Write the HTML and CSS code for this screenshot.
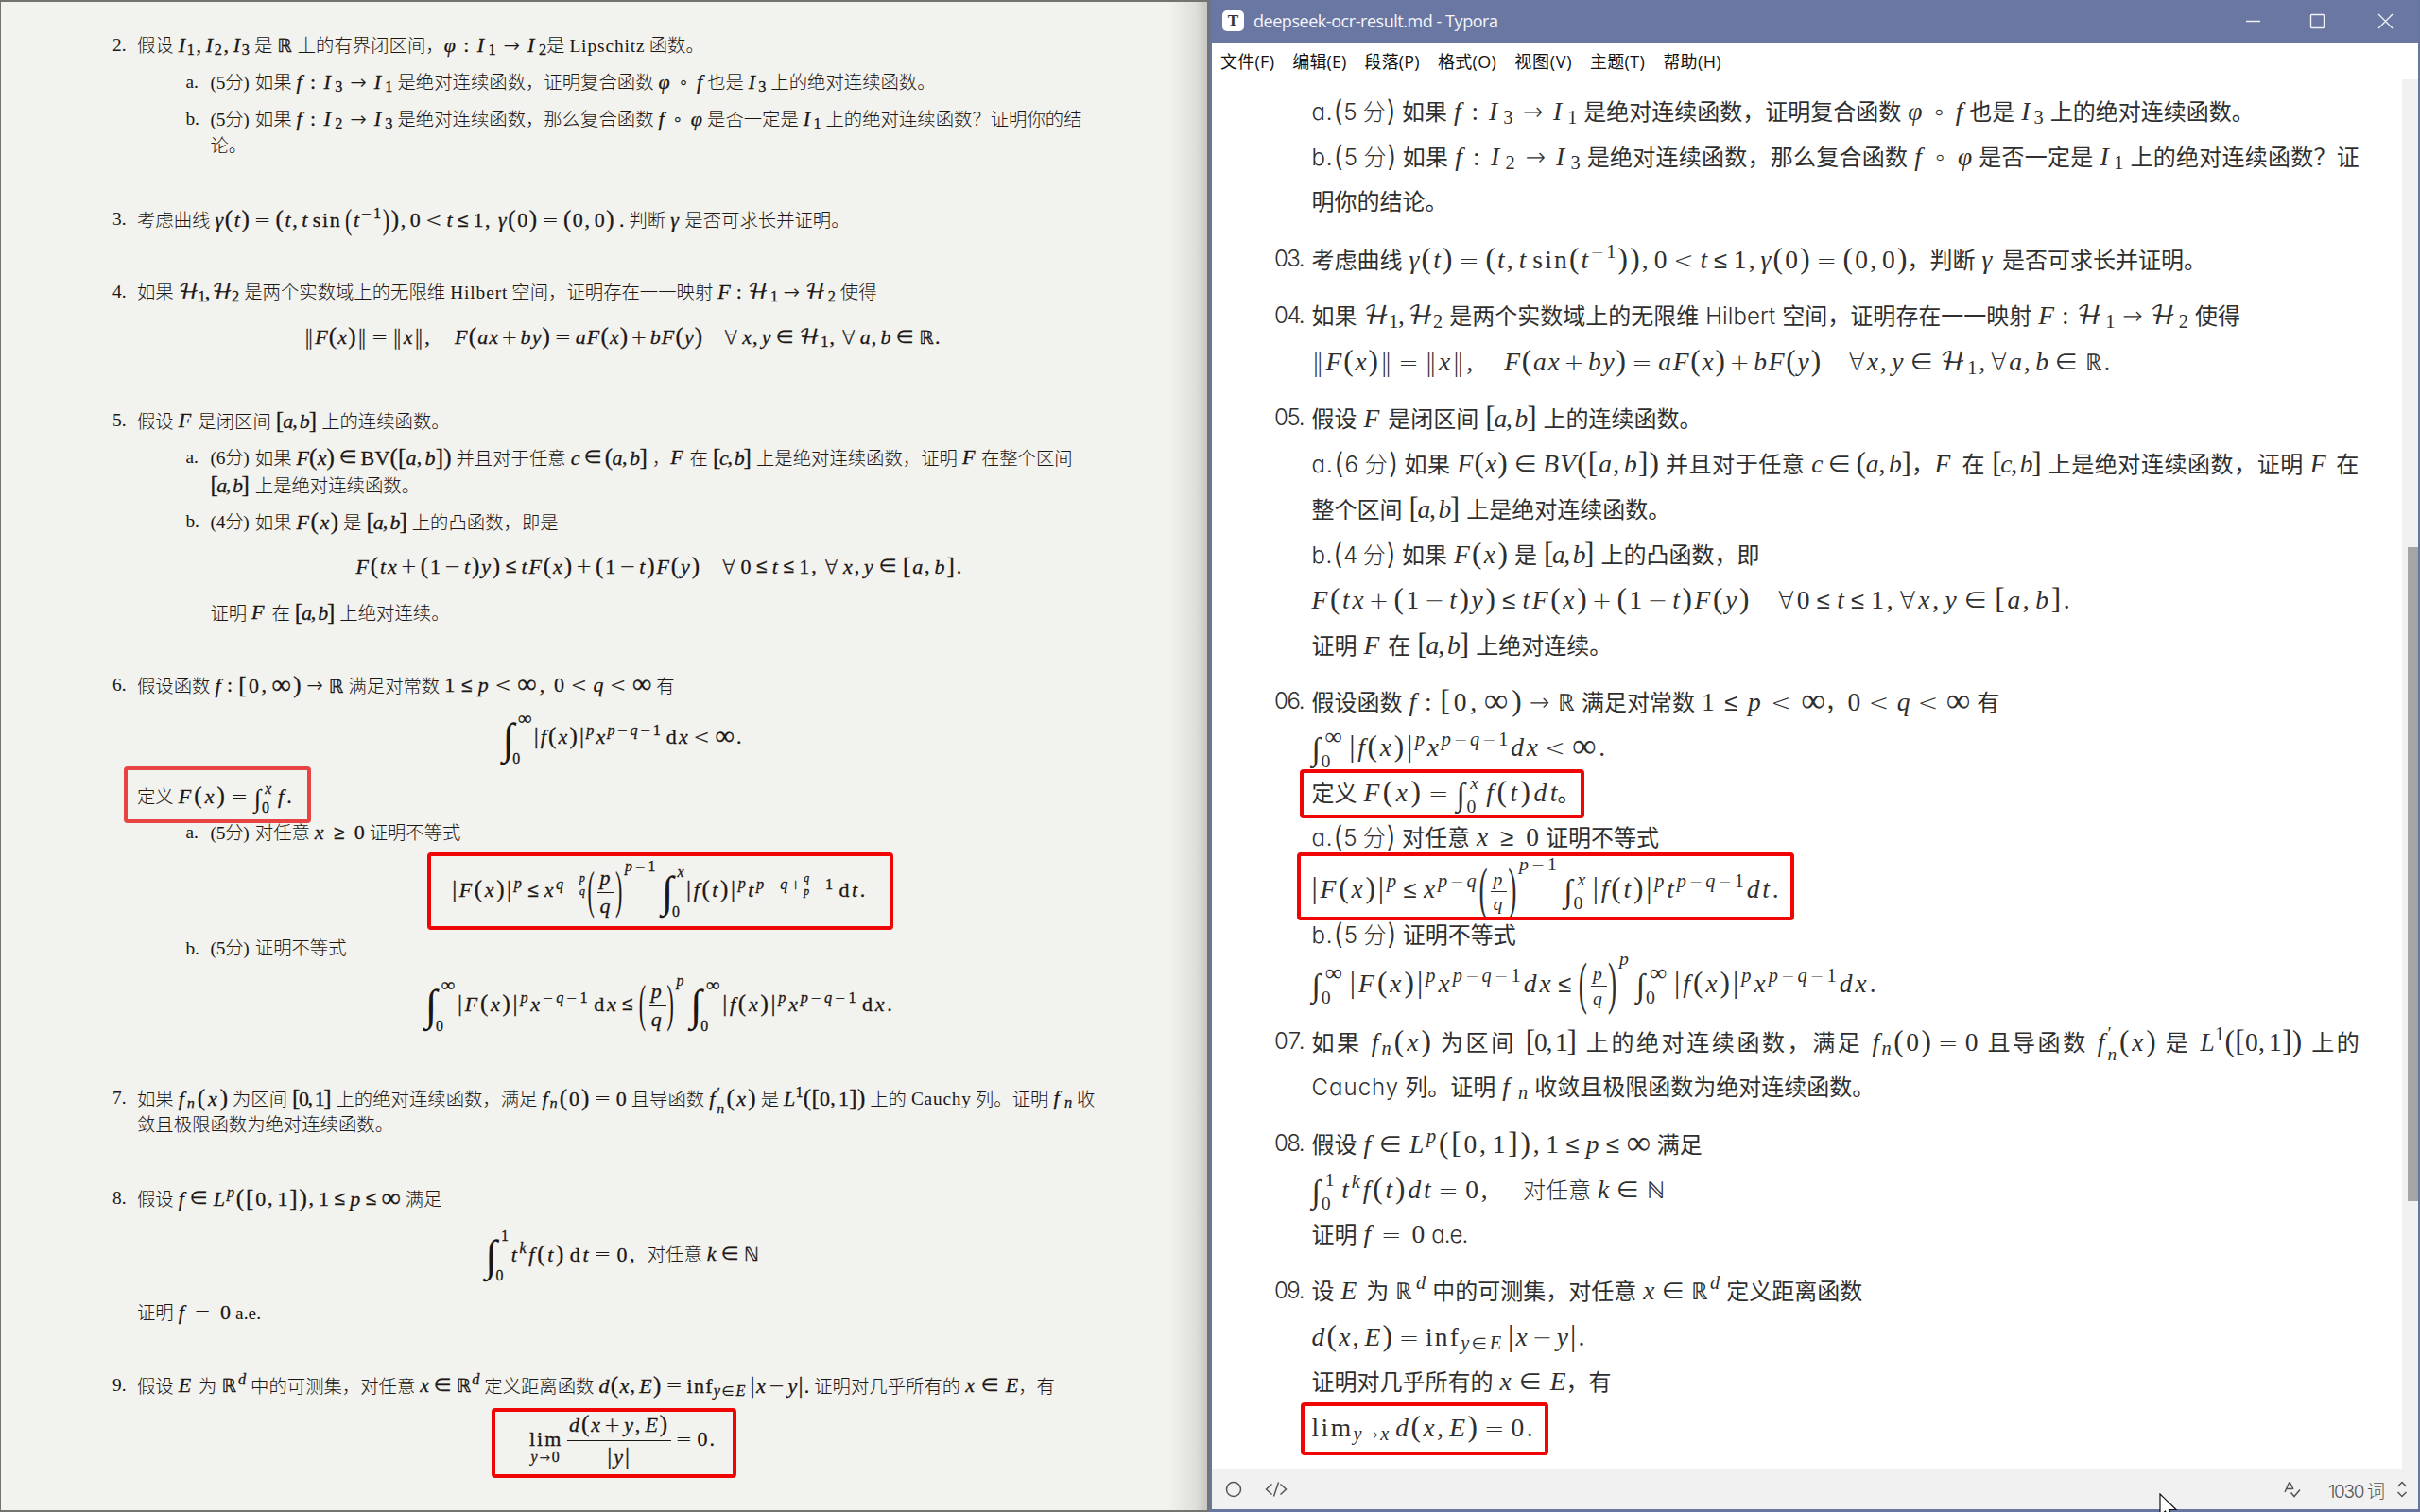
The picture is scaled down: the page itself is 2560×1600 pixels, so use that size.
FILE: index.html
```html
<!DOCTYPE html>
<html lang="zh-CN">
<head>
<meta charset="utf-8">
<title>deepseek-ocr-result.md - Typora</title>
<link rel="stylesheet" href="styles.css">
</head>
<body>
<main class="desk">
<section class="paper">
  <div class="q"><span class="no">2.</span><div class="body">
    <div class="row">假设<i data-w="85.2">I_{1},I_{2},I_{3}</i>是<i data-w="26.5">ℝ</i>上的有界闭区间，<i class="flat" data-w="108.4">φ:I_{1}→I_{2}</i>是<b data-w="89.3">Lipschitz</b>函数。</div>
    <div class="sub"><span class="let">a.</span><div class="body"><div class="row"><b class="pts" data-w="47.4">(5分)</b>如果<i data-w="112">f:I_{3}→I_{1}</i>是绝对连续函数，证明复合函数<i data-w="56.5">φ∘f</i>也是<i data-w="28.6">I_{3}</i>上的绝对连续函数。</div></div></div>
    <div class="sub"><span class="let">b.</span><div class="body"><div class="row"><b class="pts" data-w="47.4">(5分)</b>如果<i data-w="112">f:I_{2}→I_{3}</i>是绝对连续函数，那么复合函数<i data-w="56.5">f∘φ</i>是否一定是<i data-w="28.7">I_{1}</i>上的绝对连续函数？证明你的结</div><div class="row">论。</div></div></div>
  </div></div>
  <div class="q"><span class="no">3.</span><div class="body">
    <div class="row">考虑曲线<i data-w="443">γ(t)=(t,t~\r{sin}~\M{(}t^{−1}\M{)}),0&lt;t≤1,~γ(0)=(0,0)~.</i>判断<i data-w="20.2">γ</i>是否可求长并证明。</div>
  </div></div>
  <div class="q"><span class="no">4.</span><div class="body">
    <div class="row">如果<i data-w="74.5">ℋ_{1},ℋ_{2}</i>是两个实数域上的无限维<b data-w="70.2">Hilbert</b>空间，证明存在一一映射<i data-w="134.5">F:ℋ_{1}→ℋ_{2}</i>使得</div>
    <div class="eq"><i class="flat" data-w="673">‖F(x)‖=‖x‖,\q F(ax+by)=aF(x)+bF(y)\q ∀~x,y∈ℋ_{1},~∀~a,b∈ℝ.</i></div>
  </div></div>
  <div class="q"><span class="no">5.</span><div class="body">
    <div class="row">假设<i data-w="25.6">F</i>是闭区间<i data-w="53.4">[a,b]</i>上的连续函数。</div>
    <div class="sub"><span class="let">a.</span><div class="body"><div class="row"><b class="pts" data-w="47.4">(6分)</b>如果<i data-w="174">F(x)∈\r{BV}([a,b])</i>并且对于任意<i data-w="91.2">c∈(a,b]</i>，<i class="flat" data-w="20.4">F</i>在<i data-w="51">[c,b]</i>上是绝对连续函数，证明<i data-w="25">F</i>在整个区间</div><div class="row"><i class="lead" data-w="47.4">[a,b]</i>上是绝对连续函数。</div></div></div>
    <div class="sub"><span class="let">b.</span><div class="body"><div class="row"><b class="pts" data-w="47.4">(4分)</b>如果<i data-w="54.6">F(x)</i>是<i data-w="53.3">[a,b]</i>上的凸函数，即是</div>
      <div class="eq mid"><i class="flat" data-w="640.5">F(tx+(1−t)y)≤tF(x)+(1−t)F(y)\q ∀~0≤t≤1,~∀~x,y∈[a,b].</i></div>
      <div class="row">证明<i data-w="26.3">F</i>在<i data-w="52.6">[a,b]</i>上绝对连续。</div></div></div>
  </div></div>
  <div class="q"><span class="no">6.</span><div class="body">
    <div class="row">假设函数<i data-w="146">f:[0,∞)→ℝ</i>满足对常数<i data-w="229">1≤p&lt;∞,~0&lt;q&lt;∞</i>有</div>
    <div class="eq tall"><i class="flat" data-w="253">\D{0}{∞}|f(x)|^{p}x^{p−q−1}~\r{d}x&lt;∞.</i></div>
    <div class="row">定义<i class="lead5" data-w="125">F(x)=\I{0}{x}~f.</i></div>
    <div class="sub"><span class="let">a.</span><div class="body"><div class="row"><b class="pts" data-w="47.4">(5分)</b>对任意<i data-w="62.8">x≥0</i>证明不等式</div>
      <div class="eq taller"><i class="flat" data-w="437">|F(x)|^{p}≤x^{q−\f{p}{q}}\B{(}\F{p}{q}\B{)}\S{p−1}~\D{0}{x}|f(t)|^{p}t^{p−q+\f{q}{p}−1}~\r{d}t.</i></div></div></div>
    <div class="sub tight"><span class="let">b.</span><div class="body"><div class="row"><b class="pts" data-w="47.4">(5分)</b>证明不等式</div>
      <div class="eq taller last"><i class="flat" data-w="494">\D{0}{∞}|F(x)|^{p}x^{−q−1}~\r{d}x≤\B{(}\F{p}{q}\B{)}\S{p}~\D{0}{∞}|f(x)|^{p}x^{p−q−1}~\r{d}x.</i></div></div></div>
  </div></div>
  <div class="q"><span class="no">7.</span><div class="body">
    <div class="row">如果<i data-w="62.3">f_{n}(x)</i>为区间<i data-w="51.4">[0,1]</i>上的绝对连续函数，满足<i data-w="99.3">f_{n}(0)=0</i>且导函数<i data-w="59.5">f\s{n}{′}(x)</i>是<i data-w="96.2">L^{1}([0,1])</i>上的<b data-w="73">Cauchy</b>列。证明<i data-w="29.7">f_{n}</i>收</div>
    <div class="row">敛且极限函数为绝对连续函数。</div>
  </div></div>
  <div class="q"><span class="no">8.</span><div class="body">
    <div class="row">假设<i data-w="245">f∈L^{p}([0,1]),1≤p≤∞</i>满足</div>
    <div class="eq tall low"><i class="flat" data-w="161.5">\D{0}{1}t^{k}f(t)~\r{d}t=0,</i><span class="cjk">对任意</span><i class="lead5" data-w="60">k∈ℕ</i></div>
    <div class="row">证明<i data-w="65.4">f=0</i>a.e.</div>
  </div></div>
  <div class="q"><span class="no">9.</span><div class="body">
    <div class="row">假设<i data-w="26.3">E</i>为<i data-w="35.7">ℝ^{d}</i>中的可测集，对任意<i data-w="73">x∈ℝ^{d}</i>定义距离函数<i data-w="232.8">d(x,E)=\r{inf}_{y∈E}~|x−y|.</i>证明对几乎所有的<i class="lead5" data-w="61">x∈E</i>，有</div>
    <div class="eq tall lim"><i class="flat" data-w="196">\L{y→0}~\F{d(x+y,E)}{|y|}=0.</i></div>
  </div></div>
</section>

<section class="window">
  <header class="title">
    <span class="logo">T</span><b class="flat" data-w="259">deepseek-ocr-result.md - Typora</b>
    <svg class="ctl" viewBox="0 0 160 20" width="160" height="20"><path d="M2 10.500H17M71.500 3.500h12a1 1 0 0 1 1 1v12a1 1 0 0 1-1 1h-12a1 1 0 0 1-1-1v-12a1 1 0 0 1 1-1zM142 3l15 15M157 3l-15 15"/></svg>
  </header>
  <nav class="menu">
    <b class="flat" data-w="57">文件(F)</b><b class="flat" data-w="57">编辑(E)</b><b class="flat" data-w="58">段落(P)</b><b class="flat" data-w="62">格式(O)</b><b class="flat" data-w="60.4">视图(V)</b><b class="flat" data-w="58">主题(T)</b><b class="flat" data-w="61.5">帮助(H)</b>
  </nav>
  <div class="view">
    <article class="doc">
      <div class="item"><b class="num" data-w="39.5"></b><div>
        <div class="ln"><b class="pts" data-w="95.4">a.<u>(</u>5 分<u>)</u></b>如果<i data-w="144.4">f:I_{3}→I_{1}</i>是绝对连续函数，证明复合函数<i data-w="72">φ∘f</i>也是<i data-w="37.5">I_{3}</i>上的绝对连续函数。</div>
        <div class="ln j1"><b class="pts" data-w="96.2">b.<u>(</u>5 分<u>)</u></b>如果<i data-w="146.5">f:I_{2}→I_{3}</i>是绝对连续函数，那么复合函数<i data-w="75">f∘φ</i>是否一定是<i data-w="39">I_{1}</i>上的绝对连续函数？证</div>
        <div class="ln">明你的结论。</div></div></div>
      <div class="item"><b class="num" data-w="39.5">03.</b><div>
        <div class="ln">考虑曲线<i class="lead5" data-w="534">γ(t)=(t,t~\r{sin}(t^{−1})),0&lt;t≤1,γ(0)=(0,0)</i>，判断<i data-w="28.4">γ</i>是否可求长并证明。</div></div></div>
      <div class="item"><b class="num" data-w="39.5">04.</b><div>
        <div class="ln">如果<i data-w="97.7">ℋ_{1},ℋ_{2}</i>是两个实数域上的无限维<b data-w="88">Hilbert</b>空间，证明存在一一映射<i data-w="172.8">F:ℋ_{1}→ℋ_{2}</i>使得</div>
        <div class="ln"><i class="flat" data-w="845">‖F(x)‖=‖x‖,\q F(ax+by)=aF(x)+bF(y)\q ∀x,y∈ℋ_{1},∀a,b∈ℝ.</i></div></div></div>
      <div class="item"><b class="num" data-w="39.5">05.</b><div>
        <div class="ln">假设<i data-w="32.7">F</i>是闭区间<i data-w="68.4">[a,b]</i>上的连续函数。</div>
        <div class="ln j2"><b class="pts" data-w="97.9">a.<u>(</u>6 分<u>)</u></b>如果<i data-w="227.5">F(x)∈BV([a,b])</i>并且对于任意<i class="lead5" data-w="112.7">c∈(a,b]</i>，<i class="trail" data-w="29">F</i>在<i data-w="66.6">[c,b]</i>上是绝对连续函数，证明<i data-w="34.5">F</i>在</div>
        <div class="ln">整个区间<i data-w="67.7">[a,b]</i>上是绝对连续函数。</div>
        <div class="ln"><b class="pts" data-w="95.4">b.<u>(</u>4 分<u>)</u></b>如果<i data-w="71">F(x)</i>是<i data-w="67.5">[a,b]</i>上的凸函数，即</div>
        <div class="ln"><i class="flat" data-w="802">F(tx+(1−t)y)≤tF(x)+(1−t)F(y)\q ∀0≤t≤1,∀x,y∈[a,b].</i></div>
        <div class="ln">证明<i data-w="32.7">F</i>在<i data-w="69">[a,b]</i>上绝对连续。</div></div></div>
      <div class="item"><b class="num" data-w="39.5">06.</b><div>
        <div class="ln">假设函数<i data-w="189.5">f:[0,∞)→ℝ</i>满足对常数<i class="lead5" data-w="137.6">1≤p&lt;∞</i>，<i class="trail" data-w="136.6">0&lt;q&lt;∞</i>有</div>
        <div class="ln"><i class="flat" data-w="310.5">\I{0}{∞}~|f(x)|^{p}x^{p−q−1}dx&lt;∞.</i></div>
        <div class="ln">定义<i class="lead5" data-w="212">F(x)=\I{0}{x}~f(t)dt</i>。</div>
        <div class="ln"><b class="pts" data-w="95.4">a.<u>(</u>5 分<u>)</u></b>对任意<i data-w="80.2">x≥0</i>证明不等式</div>
        <div class="ln h56"><i class="flat" data-w="494">|F(x)|^{p}≤x^{p−q}\B{(}\G{p}{q}\B{)}\S{p−1}~\I{0}{x}~|f(t)|^{p}t^{p−q−1}dt.</i></div>
        <div class="ln"><b class="pts" data-w="96.2">b.<u>(</u>5 分<u>)</u></b>证明不等式</div>
        <div class="ln h52"><i class="flat" data-w="597">\I{0}{∞}~|F(x)|^{p}x^{p−q−1}dx≤\B{(}\G{p}{q}\B{)}\S{p}~\I{0}{∞}~|f(x)|^{p}x^{p−q−1}dx.</i></div></div></div>
      <div class="item"><b class="num" data-w="39.5">07.</b><div>
        <div class="ln j3">如果<i class="wide" data-w="83.3">f_{n}(x)</i>为区间<i class="wide" data-w="74">[0,1]</i>上的绝对连续函数，满足<i class="wide" data-w="132">f_{n}(0)=0</i>且导函数<i class="wide" data-w="82">f\s{n}{′}(x)</i>是<i class="wide" data-w="127.8">L^{1}([0,1])</i>上的</div>
        <div class="ln"><b class="lat" data-w="98.7">Cauchy</b>列。证明<i data-w="41">f_{n}</i>收敛且极限函数为绝对连续函数。</div></div></div>
      <div class="item"><b class="num" data-w="39.5">08.</b><div>
        <div class="ln">假设<i data-w="317.3">f∈L^{p}([0,1]),1≤p≤∞</i>满足</div>
        <div class="ln"><i class="flat" data-w="190">\I{0}{1}~t^{k}f(t)dt=0,</i><span class="thin">对任意</span><i data-w="85">k∈ℕ</i></div>
        <div class="ln">证明<i data-w="78.7">f=0</i><b class="flat" data-w="39">a.e.</b></div></div></div>
      <div class="item"><b class="num" data-w="39.5">09.</b><div>
        <div class="ln">设<i data-w="33.7">E</i>为<i data-w="46">ℝ^{d}</i>中的可测集，对任意<i data-w="95">x∈ℝ^{d}</i>定义距离函数</div>
        <div class="ln"><i class="flat" data-w="289">d(x,E)=\r{inf}_{y∈E}~|x−y|.</i></div>
        <div class="ln">证明对几乎所有的<i class="lead5" data-w="77">x∈E</i>，有</div>
        <div class="ln"><i class="flat" data-w="234">\r{lim}_{y→x}~d(x,E)=0.</i></div></div></div>
    </article>
    <div class="track"><div class="thumb"></div></div>
  </div>
  <footer class="status">
    <svg width="70" height="22" viewBox="0 0 70 22"><circle cx="9" cy="11" r="7.500"/><path d="M49.500 5.500l-6 5.500 6 5.500M58.500 5.500l6 5.500-6 5.500M56.500 3.500l-5 15"/></svg>
    <span class="grow"></span>
    <svg class="spell" width="20" height="20" viewBox="0 0 20 20"><path d="M2 13L6.500 3h1L11 10M4 9.500h6M8.500 13.500l3.500 4 6-7"/></svg>
    <b class="flat words" data-w="60">1030 词</b>
    <svg width="14" height="22" viewBox="0 0 14 22"><path d="M2.500 8l4.500-4.500L11.500 8M2.500 14l4.500 4.500 4.500-4.500"/></svg>
  </footer>
</section>
</main>
<div class="mark soft m1"></div><div class="mark m2"></div><div class="mark m3"></div>
<div class="mark m4"></div><div class="mark m5"></div><div class="mark m6"></div>
<svg class="cursor" width="20" height="28" viewBox="0 0 20 28"><path d="M1 1v23l5.500-5 4 8.500 4-2-4-8H18z"/></svg>
<script src="math.js"></script>
</body>
</html>
```
FILE: styles.css
```css
* { box-sizing: border-box; }
body {
  margin: 0;
  width: 2560px;
  height: 1600px;
  overflow: hidden;
  position: relative;
  font-family: "Liberation Serif", "Noto Sans CJK SC", serif;
}
b { font-weight: inherit; }
.desk { display: grid; grid-template: 1600px / 1279px 1281px; }

/* scanned exam sheet */
.paper {
  background: linear-gradient(90deg, transparent 1235px, #dededa 1264px, #c4c4c0 1277px), #f2f2ee;
  border: solid #73736f;
  border-width: 2px 2px 2px 1px;
  padding: 31px 106px 0 118px;
  font-size: 19.360px;
  font-weight: 300;
  color: #1c1615;
  overflow: hidden;
}
.q { display: flex; margin-bottom: 48px; }
.no { width: 26px; line-height: 29px; }
.let { width: 26px; line-height: 29px; }
.body { flex: 1; }
.row { height: 29px; line-height: 29px; white-space: nowrap; }
.sub { display: flex; margin: 10px 0 0 51.400px; }
.eq {
  display: flex;
  justify-content: center;
  align-items: center;
  height: 29px;
  line-height: 29px;
  margin: 19px 0 10.500px;
}
.eq.mid { margin-bottom: 19px; }
.eq.tall { height: 60px; margin: 11px 0 17.500px; }
.eq.low { margin: 15.500px 0 16.500px; }
.eq.lim { margin-top: 13px; }
.eq.taller { height: 74px; margin: 5px 0 15px; }
.sub.tight { margin-top: 0; }
.eq.last { margin: 2.500px 0 4px; }
.eq .cjk { margin-left: 10px; }

/* formulas and fitted words */
[data-w] { display: inline-block; white-space: nowrap; line-height: inherit; padding-left: 5px; }
i[data-w] {
  font-family: "Liberation Serif", "DejaVu Math TeX Gyre", "DejaVu Serif", "DejaVu Sans", serif;
  font-style: normal;
  font-weight: 400;
}
.paper i[data-w] { font-size: 22px; -webkit-text-stroke: .3px #1c1615; }
.doc i[data-w] { font-size: 27.500px; color: #2f2f2f; }
.doc [data-w] { padding-left: 7px; }
[data-w].flat, [data-w].lead, [data-w].pts, [data-w].lat, [data-w].num { padding-left: 0; }
.doc [data-w].flat, .doc [data-w].lat, .doc [data-w].pts, .doc [data-w].num, .doc [data-w].trail { padding-left: 0; }
.doc [data-w].wide { padding-left: 10px; }
.v { font-style: italic; }
.op { font-family: "DejaVu Sans Light", "DejaVu Sans", sans-serif; font-weight: 200; font-size: .93em; }
.inf { font-size: 1.300em; line-height: 0; vertical-align: -.04em; }
.fence { font-size: 1.140em; vertical-align: -.01em; }
.fence.dbl { font-family: "DejaVu Sans Light", "DejaVu Sans", sans-serif; font-weight: 200; font-size: .96em; }
.bb { font-family: "DejaVu Sans Light", "DejaVu Sans", sans-serif; font-size: .9em; }
.doc .bb { font-weight: 200; }
.rel { margin: 0 .18em; }
.bin { margin: 0 .1em; }
.com { margin-right: .14em; }
.thinsp { display: inline-block; width: .17em; }
.quad { display: inline-block; width: 1em; }
.sup, .sub2 { font-size: .74em; line-height: 0; }
.sup { vertical-align: .52em; }
.sub2 { vertical-align: -.2em; }
.sup .op, .sub2 .op, .lims .op, .high .op, .limop .op { margin: 0; font-size: .86em; }
.stack { display: inline-flex; flex-direction: column; font-size: .7em; line-height: 1.150; margin: -20px 0; vertical-align: middle; }
.int { display: inline-flex; align-items: center; vertical-align: middle; margin: -30px 0; position: relative; }
.int .g { font-size: 34px; line-height: 36px; }
.paper .int .g { font-size: 27px; -webkit-text-stroke: 0; }
.int .lims { display: flex; flex-direction: column; justify-content: space-between; font-size: .72em; line-height: 1; height: 44px; margin-left: -2px; }
.int .lims > span:first-child { padding-left: .2em; }
.paper .int .lims { height: 36px; }
.paper .int.disp .g { font-size: 46px; line-height: 52px; }
.paper .int.disp .lims { height: 58px; margin-left: -4px; }
.paper .int.disp .lims > span:first-child { padding-left: .35em; }
.delim { display: inline-block; line-height: 1; transform: scaleY(2.500); margin: -10px 0; -webkit-text-stroke: 0; }
.doc .delim { transform: scaleY(2.200); }
.delim.med { transform: scaleY(1.400); }
.high { font-size: .72em; line-height: 0; vertical-align: 1.450em; }
.paper .high { vertical-align: 1.700em; }
.frac { display: inline-flex; flex-direction: column; align-items: center; vertical-align: middle; margin: -30px 1px; line-height: 1.200; }
.frac > span:first-child { border-bottom: 1.500px solid; padding: 0 2px 2px; }
.frac > span:last-child { padding-top: 1px; }
.frac.small { font-size: .72em; line-height: 1.150; }
.frac.tiny { font-size: .72em; line-height: 1; margin: -12px 0; }
.frac.tiny > span:first-child { border-width: 1px; padding: 0; }
.limop { display: inline-flex; flex-direction: column; align-items: center; vertical-align: middle; line-height: 1; margin: -20px 0 -32px; }
.limop .u { font-size: .72em; }

/* editor window */
.window {
  display: flex;
  flex-direction: column;
  background: #fff;
  border: solid #66769f;
  border-width: 0 2px 3px 3px;
  overflow: hidden;
}
.title { height: 45px; background: #6a77a3; color: #f4f6fb; display: flex; align-items: center; padding: 0 0 2px 11px; font: 18px "Open Sans", sans-serif; flex: none; }
.logo { width: 23px; height: 22px; border-radius: 5px; background: #fff; color: #333; font: bold 17px/22px "Liberation Serif", serif; text-align: center; margin-right: 10px; }
.ctl { margin-left: auto; margin-right: 24px; fill: none; stroke: #f0f2f8; stroke-width: 1.400; }
.menu { height: 39px; flex: none; display: flex; gap: 19.300px; padding: 1px 0 0 9px; font: 18px/39px "Open Sans", "Noto Sans CJK SC", sans-serif; color: #111; }
.view { flex: 1; display: flex; overflow: hidden; min-height: 0; }
.doc { flex: 1; padding: 10px 0 0 66px; font: 400 24px/48px Inter, "Noto Sans CJK SC", sans-serif; color: #2f2f2f; }
.doc b { font-weight: 300; font-feature-settings: "cv11"; }
.doc .pts { word-spacing: -2px; }
.doc u { text-decoration: none; font-size: 30px; line-height: 0; vertical-align: -1px; }
.item { display: flex; margin-bottom: 12px; }
.ln { height: 48px; white-space: nowrap; }
.h56 { height: 56px; line-height: 60px; }
.h52 { height: 52px; line-height: 52px; }
.j1 { letter-spacing: .25px; }
.j2 { letter-spacing: .55px; }
.j3 { letter-spacing: 2.600px; }
.thin { font-weight: 300; margin-left: 33.500px; }
.track { width: 17px; background: #f1f1f1; }
.thumb { width: 11px; height: 692px; margin: 495px 0 0 6px; background: #a5a5a5; }
.status { flex: none; height: 43px; background: #f1f1f1; border-top: 1px solid #d9d9d9; display: flex; align-items: center; padding: 0 10px 0 14px; font: 300 19px Inter, "Noto Sans CJK SC", sans-serif; color: #555; }
.status svg { fill: none; stroke: #555; stroke-width: 1.500; }
.grow { flex: 1; }
.spell { margin-right: 28px; }
.words { margin-right: 11px; }

/* annotation frames over both documents */
.mark { position: absolute; border: 4px solid #f00505; border-radius: 4px; }
.soft { border-color: #e84343; }
.m1 { left: 131px; top: 811px; width: 198px; height: 60px; }
.m2 { left: 452px; top: 902px; width: 493px; height: 82px; }
.m3 { left: 520px; top: 1490px; width: 259px; height: 74px; }
.m4 { left: 1375px; top: 814px; width: 301px; height: 52px; }
.m5 { left: 1372px; top: 902px; width: 526px; height: 72px; }
.m6 { left: 1376px; top: 1484px; width: 262px; height: 56px; }
.cursor { position: absolute; left: 2284px; top: 1580px; fill: #fff; stroke: #111; stroke-width: 1.200; }
```
FILE: math.js
```js
// Small formula typesetter: turns the source inside <i data-w> into styled spans,
// then spreads the letters so that each formula or word fills its measure.
function el(cls, kids) {
  const n = document.createElement('span');
  n.className = cls;
  (kids || []).forEach(k => n.append(k));
  return n;
}
function parse(src, roman) {
  const out = [];
  let i = 0;
  function group() {
    let depth = 0, start = i + 1;
    for (; i < src.length; i++) {
      if (src[i] === '{') depth++;
      if (src[i] === '}' && --depth === 0) { i++; return src.slice(start, i - 1); }
    }
    return '';
  }
  while (i < src.length) {
    const c = src[i++];
    if (c === ' ') continue;
    if (c === '^') out.push(el('sup', parse(group())));
    else if (c === '_') out.push(el('sub2', parse(group())));
    else if (c === '~') out.push(el('thinsp'));
    else if (c === '\\') {
      const k = src[i++];
      if (k === 'q') out.push(el('quad'));
      if (k === 'r') out.push(el('', parse(group(), true)));
      if (k === 'M') out.push(el('delim med', [group()]));
      if (k === 'B') out.push(el('delim', [group()]));
      if (k === 'S') out.push(el('high', parse(group())));
      if (k === 'L') out.push(el('limop', [el('', ['lim']), el('u', parse(group()))]));
      if ('FGfDIs'.includes(k)) {
        const a = el('', parse(group())), b = el('', parse(group()));
        if (k === 'F') out.push(el('frac', [a, b]));
        if (k === 'G') out.push(el('frac small', [a, b]));
        if (k === 'f') out.push(el('frac tiny', [a, b]));
        if (k === 's') out.push(el('stack', [b, a]));
        if (k === 'D') out.push(el('int disp', [el('g', ['∫']), el('lims', [b, a])]));
        if (k === 'I') out.push(el('int', [el('g', ['∫']), el('lims', [b, a])]));
      }
    }
    else if (c === ':') out.push(el('rel', [c]));
    else if ('=<≤≥∈→'.includes(c)) out.push(el('rel op', [c]));
    else if ('+−∘'.includes(c)) out.push(el('bin op', [c]));
    else if (c === '∀') out.push(el('op', [c]));
    else if (c === '∞') out.push(el('inf', [c]));
    else if ('ℝℕ'.includes(c)) out.push(el('bb', [c]));
    else if (c === '‖') out.push(el('fence dbl', [c]));
    else if ('()[]|'.includes(c)) out.push(el('fence', [c]));
    else if (c === ',') out.push(el('com', [c]));
    else if (!roman && /[a-zA-Zγφ]/.test(c)) out.push(el('v', [c]));
    else out.push(c);
  }
  return out;
}
document.querySelectorAll('[data-w]').forEach(n => {
  if (n.tagName === 'I') n.replaceChildren(...parse(n.textContent));
  const target = +n.dataset.w;
  const pad = parseFloat(getComputedStyle(n).paddingLeft);
  let right = pad;
  if (n.classList.contains('lead') || n.classList.contains('pts')) right = 6;
  if (n.classList.contains('lat') || n.classList.contains('num')) right = 7;
  if (n.classList.contains('lead5')) right = 0;
  if (n.classList.contains('trail')) right = 7;
  n.style.letterSpacing = '0px';
  const w0 = n.getBoundingClientRect().width;
  n.style.letterSpacing = '1px';
  const w1 = n.getBoundingClientRect().width;
  const ls = w1 - w0 > 1.5 ? (target - right - w0) / (w1 - w0 - 1) : 0;
  n.style.letterSpacing = ls.toFixed(3) + 'px';
  n.style.width = target + 'px';
});
```
